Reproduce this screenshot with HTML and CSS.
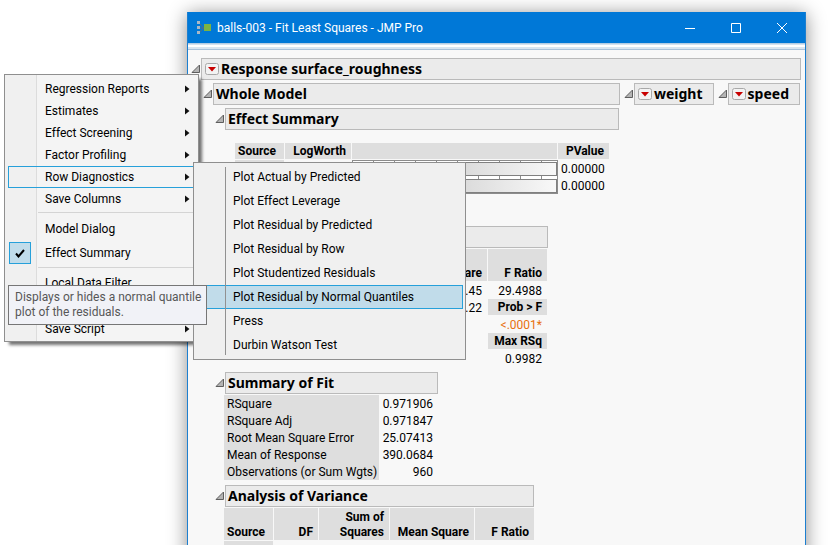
FILE: index.html
```html
<!DOCTYPE html>
<html lang="en">
<head>
<meta charset="utf-8">
<title>balls-003 - Fit Least Squares - JMP Pro</title>
<link rel="stylesheet" href="styles.css">
</head>
<body>
<svg class="defs" aria-hidden="true">
  <symbol id="disclose" viewBox="0 0 10 10"><path d="M1 8.500H8.500V1Z" fill="#b4b4b4" stroke="#5e5e5e"/></symbol>
  <symbol id="hotspot" viewBox="0 0 14 12"><rect x=".5" y=".5" width="13" height="11" rx="2" fill="#f3f3f3" stroke="#a8a8a8"/><path d="M3 4h8L7 8.500Z" fill="#c80000"/></symbol>
  <symbol id="arrow" viewBox="0 0 5 8"><path d="M0 0.500L4.500 4L0 7.500Z" fill="#111"/></symbol>
</svg>

<main class="window">
  <header class="titlebar">
    <svg class="app-icon" viewBox="0 0 15 14" aria-hidden="true">
      <path d="M2 2L7 7L2 12M2 7H7" fill="none" stroke="#4d6f88"/>
      <path d="M0 0h3v3H0zM0 5h3v3H0zM0 10h3v3H0z" fill="#a9b8c6"/>
      <path d="M7 3h7v7H7z" fill="#7cb342"/>
    </svg>
    <h1>balls-003 - Fit Least Squares - JMP Pro</h1>
    <div class="controls">
      <button aria-label="Minimize"><svg viewBox="0 0 10 10"><path d="M0 5.500H10"/></svg></button>
      <button aria-label="Maximize"><svg viewBox="0 0 10 10"><path d="M.5 .5h9v9h-9z"/></svg></button>
      <button aria-label="Close"><svg viewBox="0 0 10 10"><path d="M0 0L10 10M10 0L0 10"/></svg></button>
    </div>
  </header>
  <div class="ribbon"></div>

  <div class="report">
    <div class="outline">
      <button class="toggle" aria-label="Collapse"><svg><use href="#disclose"/></svg></button>
      <h2><button class="hot" aria-label="Response options"><svg><use href="#hotspot"/></svg></button>Response surface_roughness</h2>
    </div>

    <div class="columns">
      <section class="whole">
        <div class="outline">
          <button class="toggle" aria-label="Collapse"><svg><use href="#disclose"/></svg></button>
          <h2>Whole Model</h2>
        </div>

        <div class="nested">
          <section>
            <div class="outline">
              <button class="toggle" aria-label="Collapse"><svg><use href="#disclose"/></svg></button>
              <h3>Effect Summary</h3>
            </div>
            <table class="effects">
              <colgroup><col class="c-source"><col class="c-worth"><col class="c-bars"><col class="c-p"></colgroup>
              <thead><tr><th class="left">Source</th><th>LogWorth</th><th></th><th>PValue</th></tr></thead>
              <tbody>
                <tr><th></th><td></td><td class="chart" rowspan="2"><div class="bar"></div><div class="bar"></div></td><td>0.00000</td></tr>
                <tr><th></th><td></td><td>0.00000</td></tr>
              </tbody>
            </table>
          </section>

          <section class="lack">
            <div class="outline">
              <button class="toggle" aria-label="Collapse"><svg><use href="#disclose"/></svg></button>
              <h3></h3>
            </div>
            <table>
              <colgroup><col class="l-source"><col class="c-df"><col class="c-ss"><col class="c-ss"><col class="c-f"></colgroup>
              <thead><tr class="tall"><th></th><th></th><th></th><th>Square</th><th>F Ratio</th></tr></thead>
              <tbody>
                <tr><th></th><td></td><td></td><td>6.45</td><td>29.4988</td></tr>
                <tr><th></th><td></td><td></td><td>0.22</td><th>Prob &gt; F</th></tr>
                <tr><td></td><td></td><td></td><td></td><td class="signif">&lt;.0001*</td></tr>
                <tr><td></td><td></td><td></td><td></td><th>Max RSq</th></tr>
                <tr><td></td><td></td><td></td><td></td><td>0.9982</td></tr>
              </tbody>
            </table>
          </section>

          <section class="summary">
            <div class="outline">
              <button class="toggle" aria-label="Collapse"><svg><use href="#disclose"/></svg></button>
              <h3>Summary of Fit</h3>
            </div>
            <table>
              <colgroup><col class="s-label"><col class="s-value"></colgroup>
              <tbody>
                <tr><th>RSquare</th><td>0.971906</td></tr>
                <tr><th>RSquare Adj</th><td>0.971847</td></tr>
                <tr><th>Root Mean Square Error</th><td>25.07413</td></tr>
                <tr><th>Mean of Response</th><td>390.0684</td></tr>
                <tr><th>Observations (or Sum Wgts)</th><td>960</td></tr>
              </tbody>
            </table>
          </section>

          <section class="anova">
            <div class="outline">
              <button class="toggle" aria-label="Collapse"><svg><use href="#disclose"/></svg></button>
              <h3>Analysis of Variance</h3>
            </div>
            <table>
              <colgroup><col class="c-source"><col class="c-df"><col class="c-ss"><col class="c-ms"><col class="c-f"></colgroup>
              <thead><tr class="tall"><th class="left">Source</th><th>DF</th><th>Sum of<br>Squares</th><th>Mean Square</th><th>F Ratio</th></tr></thead>
              <tbody><tr><th></th><td></td><td></td><td></td><td></td></tr></tbody>
            </table>
          </section>
        </div>
      </section>

      <section class="outline factor">
        <button class="toggle" aria-label="Expand"><svg><use href="#disclose"/></svg></button>
        <h2><button class="hot" aria-label="weight options"><svg><use href="#hotspot"/></svg></button>weight</h2>
      </section>
      <section class="outline factor">
        <button class="toggle" aria-label="Expand"><svg><use href="#disclose"/></svg></button>
        <h2><button class="hot" aria-label="speed options"><svg><use href="#hotspot"/></svg></button>speed</h2>
      </section>
    </div>
  </div>
</main>

<nav class="menu main-menu" aria-label="Response options">
  <button>Regression Reports<svg><use href="#arrow"/></svg></button>
  <button>Estimates<svg><use href="#arrow"/></svg></button>
  <button>Effect Screening<svg><use href="#arrow"/></svg></button>
  <button>Factor Profiling<svg><use href="#arrow"/></svg></button>
  <button class="open">Row Diagnostics<svg><use href="#arrow"/></svg></button>
  <button>Save Columns<svg><use href="#arrow"/></svg></button>
  <hr>
  <button class="roomy">Model Dialog</button>
  <button class="roomy checked"><span class="check"><svg viewBox="0 0 10 9"><path d="M1 4.500L3.500 7.500L9 1"/></svg></span>Effect Summary</button>
  <hr>
  <button>Local Data Filter</button>
  <button class="roomy"></button>
  <button>Save Script<svg><use href="#arrow"/></svg></button>
</nav>

<nav class="menu sub-menu" aria-label="Row Diagnostics">
  <button>Plot Actual by Predicted</button>
  <button>Plot Effect Leverage</button>
  <button>Plot Residual by Predicted</button>
  <button>Plot Residual by Row</button>
  <button>Plot Studentized Residuals</button>
  <button class="current">Plot Residual by Normal Quantiles</button>
  <button>Press</button>
  <button>Durbin Watson Test</button>
</nav>

<div class="tooltip" role="tooltip">Displays or hides a normal quantile<br>plot of the residuals.</div>
</body>
</html>
```
FILE: styles.css
```css
:root {
  --paper: #f8f8f8;
  --head: #dedede;
  --accent: #26a0da;
}

* { box-sizing: border-box; }

body {
  margin: 0;
  height: 100vh;
  overflow: hidden;
  background: #fff;
  color: #000;
  font: 12px/16px Roboto, "Noto Sans", sans-serif;
}

button {
  margin: 0;
  padding: 0;
  border: 0;
  background: none;
  color: inherit;
  font: inherit;
}

svg { display: block; }
.defs { display: none; }

/* Window */
.window {
  margin: 12px 27px 0 187px;
  padding-bottom: 10px;
  border: 1px solid #1c7fd0;
  border-top: 0;
  background: var(--paper);
  box-shadow: 0 2px 18px rgba(0, 0, 0, 0.45);
}

.titlebar {
  display: flex;
  align-items: center;
  height: 31px;
  padding-left: 9px;
  background: #0078d7;
  color: #fff;
}

.app-icon { width: 15px; height: 14px; margin-right: 5px; }
h1 { flex: 1; margin: 0; font-size: 12px; font-weight: 400; }
.controls { display: flex; }
.controls button { display: grid; place-items: center; width: 46px; height: 30px; }
.controls svg { width: 10px; height: 10px; fill: none; stroke: #fff; overflow: visible; }

.ribbon {
  height: 7px;
  background: linear-gradient(#b5cde3 0 1px, #d5e2ef 1px 2px, #fff 2px 4px, #d9e5f0 4px 6px, #a9c1da 6px);
}

/* Report outline */
.report { padding: 8px 4px 0 3px; }
.outline { display: flex; }
.toggle { flex: none; width: 10px; height: 22px; }
.toggle svg { width: 10px; height: 10px; }

h2, h3 {
  display: flex;
  flex: 1;
  align-items: center;
  height: 22px;
  margin: 0;
  padding-left: 2px;
  border: 1px solid #bababa;
  background: #ebebeb;
  font: 700 14px/20px "Noto Sans", "Open Sans", sans-serif;
  white-space: nowrap;
}

.hot { margin: 0 2px 0 1px; }
.hot svg { width: 14px; height: 12px; }

.columns {
  display: flex;
  align-items: flex-start;
  gap: 4px;
  margin-top: 3px;
  padding: 0 1px 0 12px;
}

.whole { flex: 1; }
.factor h2 { padding-right: 10px; }
.nested { padding: 3px 1px 0 12px; }

/* Tables */
table {
  margin: 1px 0 5px 9px;
  border-collapse: separate;
  border-spacing: 0;
  table-layout: fixed;
  width: 0;
}

th, td {
  height: 17px;
  padding: 2px 5px 0 3px;
  border: 0 solid var(--paper);
  border-right-width: 1px;
  line-height: 15px;
  text-align: right;
  white-space: nowrap;
}

th { padding-top: 1px; border-bottom-width: 1px; background: var(--head); }
th.left { text-align: left; }
.tall th { height: 33px; vertical-align: bottom; }

.c-source { width: 50px; }
.c-worth { width: 67px; }
.c-bars { width: 206px; }
.c-p { width: 52px; }
.l-source { width: 77px; }
.c-df { width: 45px; }
.c-ss { width: 71px; }
.c-ms { width: 85px; }
.c-f { width: 60px; }
.s-label { width: 155px; }
.s-value { width: 60px; }

.effects { margin: 13px 0 32px 20px; }

.effects .chart {
  padding: 1px 0 0;
  border: 1px solid #8c8c8c;
  background: repeating-linear-gradient(90deg, #fff 0 20px, #8c8c8c 20px 21px);
}

.bar { height: 14px; border: 1px solid #808080; background: linear-gradient(90deg, #b9b9b9, #f8f8f8); }
.bar + .bar { margin-top: 3px; }

.lack { width: 333px; }
.summary { width: 223px; }
.anova { width: 319px; }
.summary th { padding-top: 2px; border-width: 0; font-weight: 400; text-align: left; }
.signif { color: #e8700f; }

/* Menus */
.menu { position: absolute; border: 1px solid #8f8f8f; }
.menu button { display: flex; align-items: center; width: 100%; white-space: nowrap; }

.main-menu {
  top: 74px;
  left: 4px;
  width: 195px;
  padding: 3px 3px 1px;
  background: linear-gradient(90deg, #f0f0f0 31px, #dcdcdc 31px 32px, #f4f4f4 32px);
  box-shadow: 4px 4px 3px -1px rgba(0, 0, 0, 0.55);
}

.main-menu button { height: 22px; padding: 0 5px 0 37px; }
.main-menu .roomy { height: 24px; }
.main-menu button > svg { width: 5px; height: 8px; margin-left: auto; }
.main-menu .open { padding: 0 4px 0 36px; border: 1px solid var(--accent); }
.main-menu .checked { padding-left: 1px; }
.main-menu hr { height: 1px; margin: 2px 0 4px 30px; border: 0; background: #d4d4d4; }

.check {
  display: grid;
  place-items: center;
  width: 22px;
  height: 22px;
  margin-right: 14px;
  border: 1px solid var(--accent);
  background: #c1dcea;
}

.check svg { width: 10px; height: 9px; fill: none; stroke: #000; stroke-width: 2; }

.sub-menu {
  top: 162px;
  left: 193px;
  width: 273px;
  padding: 2px;
  background: #f0f0f0;
}

.sub-menu::before {
  content: "";
  position: absolute;
  top: 4px;
  bottom: 4px;
  left: 31px;
  width: 1px;
  background: #919191;
}

.sub-menu button { height: 24px; padding-left: 37px; }
.sub-menu .current { padding-left: 36px; border: 1px solid var(--accent); background: #c1dcea; }

.tooltip {
  position: absolute;
  top: 285px;
  left: 8px;
  padding: 4px 5px 4px 6px;
  border: 1px solid #767676;
  background: #f1f2f7;
  color: #575757;
  line-height: 15px;
  white-space: nowrap;
}
```
